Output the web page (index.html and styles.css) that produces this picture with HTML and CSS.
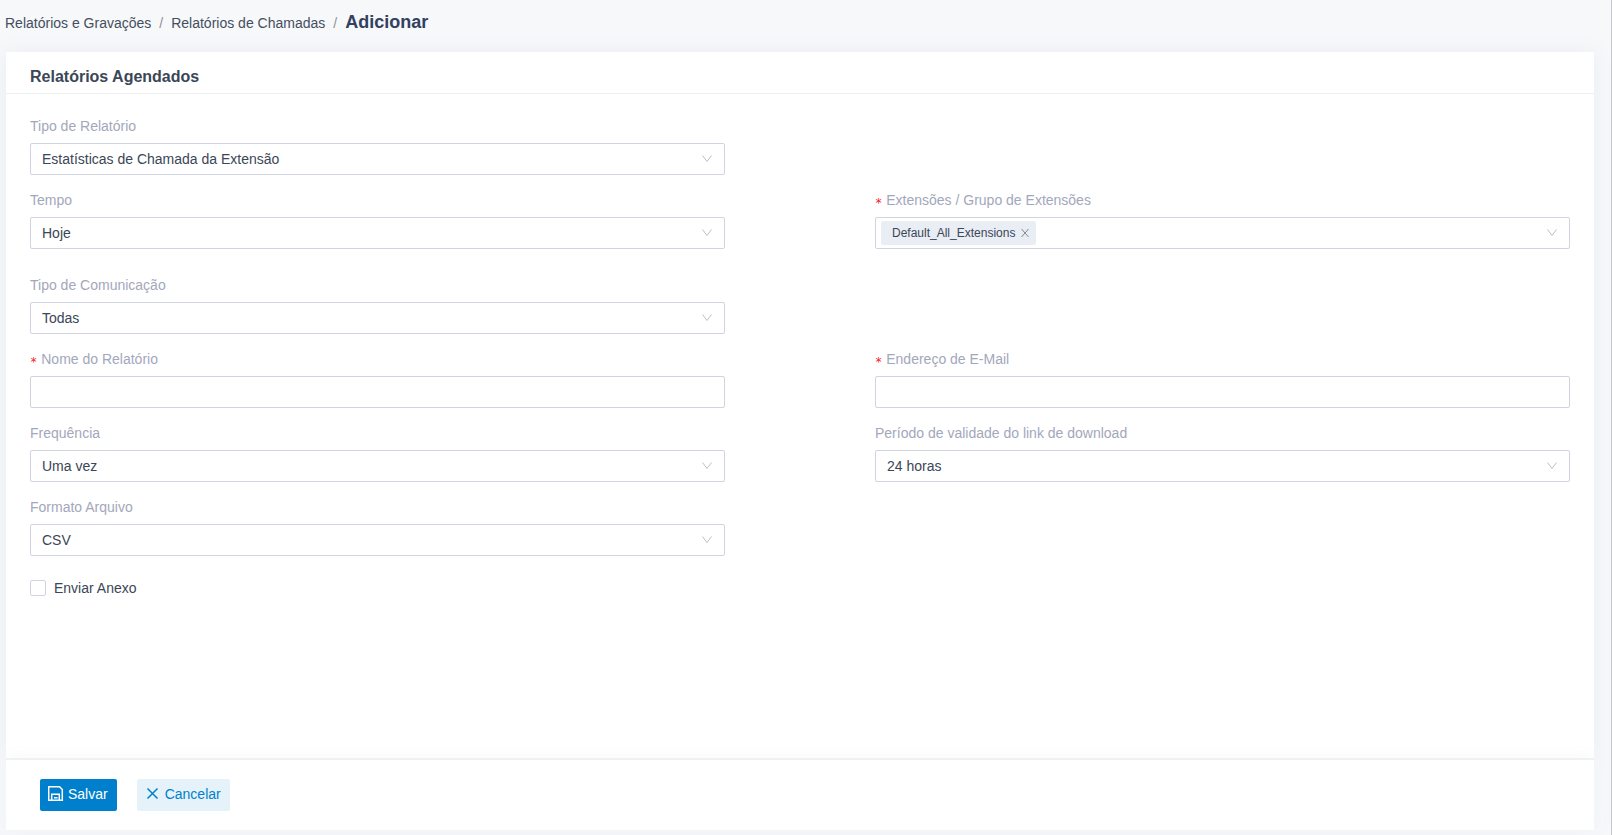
FILE: index.html
```html
<!DOCTYPE html>
<html lang="pt-BR">
<head>
    <meta charset="UTF-8">
    <meta name="viewport" content="width=device-width, initial-scale=1.0">
    <title>Relatórios Agendados</title>
    <link rel="stylesheet" href="styles.css">
</head>
<body>

<nav class="breadcrumb">
    <a href="#">Relatórios e Gravações</a>
    <span class="separator">/</span>
    <a href="#">Relatórios de Chamadas</a>
    <span class="separator">/</span>
    <span class="current">Adicionar</span>
</nav>

<main class="card">
    <h1 class="card-title">Relatórios Agendados</h1>

    <form class="report-form" id="reportForm">
        <div class="row">
            <div class="field">
                <label for="reportType">Tipo de Relatório</label>
                <div class="select">
                    <select id="reportType"><option>Estatísticas de Chamada da Extensão</option></select>
                    <svg class="arrow" viewBox="0 0 12 12"><path d="M1.500 2.500 6 8.500l4.500-6"/></svg>
                </div>
            </div>
        </div>

        <div class="row row-tags">
            <div class="field">
                <label for="time">Tempo</label>
                <div class="select">
                    <select id="time"><option>Hoje</option></select>
                    <svg class="arrow" viewBox="0 0 12 12"><path d="M1.500 2.500 6 8.500l4.500-6"/></svg>
                </div>
            </div>
            <div class="field">
                <label class="required" for="extensions">Extensões / Grupo de Extensões</label>
                <div class="select tags">
                    <span class="tag">Default_All_Extensions
                        <button type="button" class="tag-remove" aria-label="Remover">
                            <svg viewBox="0 0 10 10"><path d="M1.500 1l7 8M8.500 1l-7 8"/></svg>
                        </button>
                    </span>
                    <input type="text" id="extensions">
                    <svg class="arrow" viewBox="0 0 12 12"><path d="M1.500 2.500 6 8.500l4.500-6"/></svg>
                </div>
            </div>
        </div>

        <div class="row">
            <div class="field">
                <label for="communication">Tipo de Comunicação</label>
                <div class="select">
                    <select id="communication"><option>Todas</option></select>
                    <svg class="arrow" viewBox="0 0 12 12"><path d="M1.500 2.500 6 8.500l4.500-6"/></svg>
                </div>
            </div>
        </div>

        <div class="row">
            <div class="field">
                <label class="required" for="reportName">Nome do Relatório</label>
                <input type="text" class="text-input" id="reportName">
            </div>
            <div class="field">
                <label class="required" for="email">Endereço de E-Mail</label>
                <input type="text" class="text-input" id="email">
            </div>
        </div>

        <div class="row">
            <div class="field">
                <label for="frequency">Frequência</label>
                <div class="select">
                    <select id="frequency"><option>Uma vez</option></select>
                    <svg class="arrow" viewBox="0 0 12 12"><path d="M1.500 2.500 6 8.500l4.500-6"/></svg>
                </div>
            </div>
            <div class="field">
                <label for="validity">Período de validade do link de download</label>
                <div class="select">
                    <select id="validity"><option>24 horas</option></select>
                    <svg class="arrow" viewBox="0 0 12 12"><path d="M1.500 2.500 6 8.500l4.500-6"/></svg>
                </div>
            </div>
        </div>

        <div class="row">
            <div class="field">
                <label for="fileFormat">Formato Arquivo</label>
                <div class="select">
                    <select id="fileFormat"><option>CSV</option></select>
                    <svg class="arrow" viewBox="0 0 12 12"><path d="M1.500 2.500 6 8.500l4.500-6"/></svg>
                </div>
            </div>
        </div>

        <div class="check">
            <input type="checkbox" id="attachment">
            <label for="attachment">Enviar Anexo</label>
        </div>
    </form>

    <footer class="actions">
        <button type="submit" form="reportForm" class="btn btn-save">
            <svg viewBox="0 0 16 16"><path d="M.7.7H11.500L14.300 3.500V14.300H.7zM3.700 14V8.200h7.600V14M6 11.700h3.500"/></svg>
            Salvar
        </button>
        <button type="button" class="btn btn-cancel">
            <svg viewBox="0 0 16 16"><path d="M2.500 2.500l10 10M12.500 2.500l-10 10"/></svg>
            Cancelar
        </button>
    </footer>
</main>

</body>
</html>
```

FILE: styles.css
```css
* {
    box-sizing: border-box;
}

body {
    display: flex;
    flex-direction: column;
    min-height: 100vh;
    margin: 0;
    padding: 0 17px 5px 6px;
    border-right: 1px solid #c6c7cb;
    background-color: #f7f8fa;
    color: #3b4656;
    font-family: "Liberation Sans", Arial, sans-serif;
    font-size: 14px;
    line-height: 22px;
}

input,
select,
button {
    font: inherit;
    color: inherit;
}

.breadcrumb {
    display: flex;
    align-items: baseline;
    gap: 8px;
    height: 52px;
    margin-left: -1px;
    padding-top: 11px;
}

.breadcrumb a {
    color: #434f60;
    text-decoration: none;
}

.separator {
    color: #8b919b;
}

.current {
    color: #31415f;
    font-size: 18px;
    font-weight: bold;
}

.card {
    display: flex;
    flex: 1;
    flex-direction: column;
    background-color: #fff;
    box-shadow: 0 0 20px #e9ecf4;
}

.card-title {
    margin: 0;
    padding: 14px 24px 5px;
    border-bottom: 1px solid #f0f0f2;
    font-size: 16px;
    line-height: 22px;
}

/* Form */
.report-form {
    flex: 1;
    padding: 21px 24px;
}

.row {
    display: grid;
    grid-template-columns: 1fr 1fr;
    column-gap: 150px;
    margin-bottom: 14px;
}

.row-tags {
    margin-bottom: 25px;
}

.field label {
    display: block;
    margin-bottom: 6px;
    color: #a3a7bb;
}

.required::before {
    content: "*";
    margin-right: 4px;
    color: #f5222d;
    font-family: "DejaVu Sans Mono", monospace;
    font-size: 12px;
    line-height: 1;
    vertical-align: -2px;
}

.select {
    position: relative;
}

.select select,
.text-input,
.tags {
    display: block;
    width: 100%;
    height: 32px;
    padding: 0 11px;
    border: 1px solid #d2d3e0;
    border-radius: 2px;
    background-color: #fff;
    appearance: none;
}

.arrow {
    position: absolute;
    top: 10px;
    right: 12px;
    width: 12px;
    height: 12px;
    fill: none;
    stroke: #bfbfbf;
    pointer-events: none;
}

.tags {
    display: flex;
    align-items: center;
    padding: 0 5px;
}

.tags .arrow {
    top: 9px;
    right: 11px;
}

.tags input {
    flex: 1;
    min-width: 0;
    border: none;
    outline: none;
    background: none;
}

.tag {
    display: flex;
    align-items: center;
    gap: 5px;
    height: 24px;
    padding: 0 6px 0 11px;
    border-radius: 2px;
    background-color: #e9edf4;
    font-size: 12px;
}

.tag-remove {
    display: flex;
    padding: 0;
    border: none;
    background: none;
    cursor: pointer;
}

.tag-remove svg {
    width: 10px;
    height: 10px;
    stroke: #84888f;
}

.check {
    display: flex;
    align-items: center;
    gap: 8px;
    padding-top: 7px;
}

.check input {
    width: 16px;
    height: 16px;
    margin: 0;
    border: 1px solid #d2d3e0;
    border-radius: 2px;
    background-color: #fff;
    appearance: none;
}

.check input:checked {
    background-color: #0080cc;
}

/* Footer buttons */
.actions {
    display: flex;
    gap: 20px;
    padding: 19px 34px;
    border-top: 2px solid #f0f1f5;
    box-shadow: 0 -4px 16px #fafafb;
}

.btn {
    display: flex;
    align-items: center;
    gap: 4px;
    height: 32px;
    padding: 0 9px 2px 8px;
    border: none;
    border-radius: 2px;
    cursor: pointer;
}

.btn svg {
    width: 16px;
    height: 16px;
    fill: none;
    stroke: currentColor;
    stroke-width: 1.5;
}

.btn-save {
    background-color: #0080cc;
    color: #fff;
}

.btn-cancel {
    background-color: #e5f2fa;
    color: #0080cc;
}
```
